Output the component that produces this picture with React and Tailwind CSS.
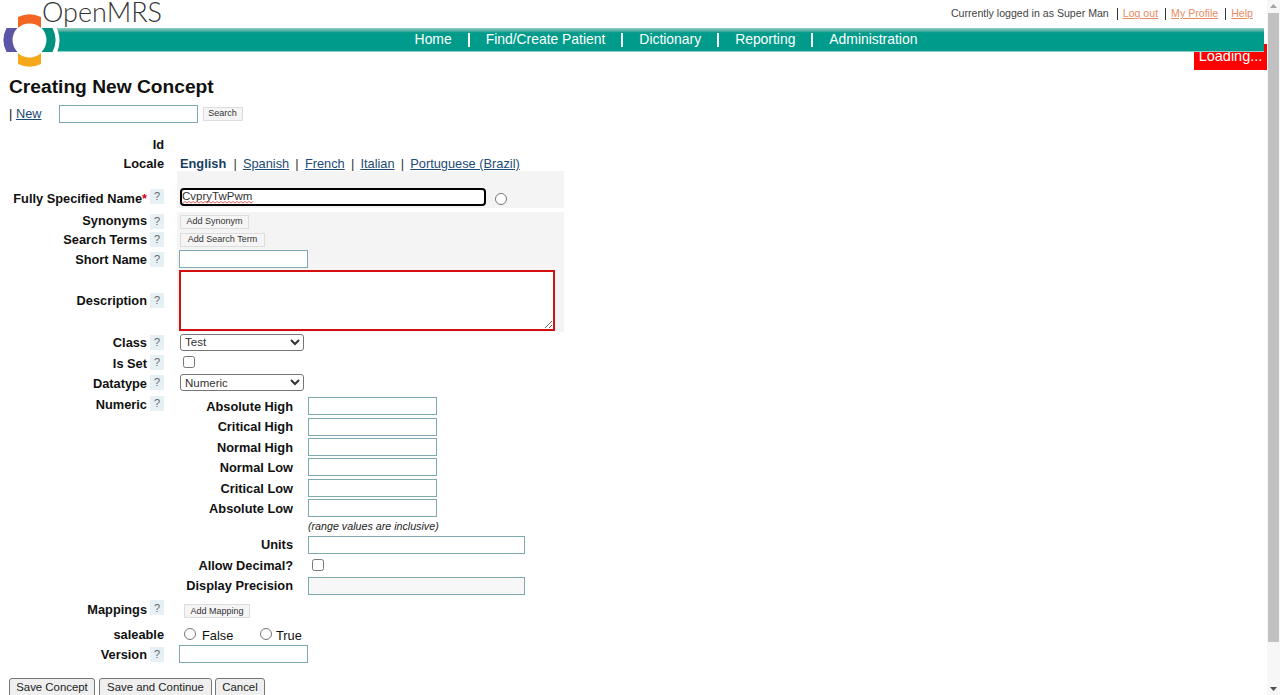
const F = "[font-family:'Liberation_Sans',Arial,sans-serif]";

function Help({ className = "" }) {
  return (
    <span className={`flex h-[15px] w-[14px] shrink-0 items-center justify-center bg-[#e7f0f5] text-[11px] text-[#666] ${className}`}>?</span>
  );
}

function Row({ h, label, help, helpCls = "", labelCls = "", children, className = "" }) {
  return (
    <div className={`flex ${className}`} style={{ height: h }}>
      <div className="flex w-[165px] shrink-0 justify-end items-center gap-[3px] pr-[1px]">
        {label && <b className={`whitespace-nowrap ${labelCls}`}>{label}</b>}
        {help && <Help className={helpCls} />}
      </div>
      <div className="ml-[14px] flex flex-1 items-center">{children}</div>
    </div>
  );
}

function TextBox({ w = "w-[129px]", gray }) {
  return <input className={`h-[18px] ${w} border border-[#7fa9b0] ${gray ? "bg-[#f7f7f7]" : "bg-white"}`} />;
}

function Small({ children, w }) {
  return (
    <button className={`flex h-[14px] items-center justify-center border border-[#dddddd] bg-[#f5f5f5] text-[9px] text-[#333] ${w}`}>
      {children}
    </button>
  );
}

function Sep() {
  return <span className="mx-[6.2px] text-[#333]">|</span>;
}

function Link({ children }) {
  return <a className="cursor-pointer text-[#1d4b75] underline">{children}</a>;
}

function NavSep() {
  return <span className="mx-[16px] h-[14px] w-[2px] bg-white" />;
}

function Sub({ label, children, h = 20.4, labelCls = "pt-[1px]" }) {
  return (
    <div className="flex items-center" style={{ height: h }}>
      <b className={`w-[118px] whitespace-nowrap text-right ${labelCls}`}>{label}</b>
      <div className="ml-[15px] flex items-center">{children}</div>
    </div>
  );
}

function Btn({ children, w }) {
  return (
    <button className={`h-[22px] whitespace-nowrap rounded-[3px] border border-[#767676] bg-[#efefef] pb-[3px] text-[11.4px] text-[#222] ${w}`}>{children}</button>
  );
}

function Logo() {
  return (
    <div className="absolute left-0 top-0 z-20 h-[70px] w-[170px]">
      <svg width="70" height="72" viewBox="0 0 70 72" className="absolute left-0 top-0">
        <circle cx="29.5" cy="40.5" r="30" fill="#fff" />
        <path d="M18 17 A26 26 0 0 1 41 17 L41 28 A17 17 0 0 0 18 28 Z" fill="#f26522" />
        <path d="M6.5 28 A26 26 0 0 0 6.5 52 L17.5 52 A17 17 0 0 1 17.5 28 Z" fill="#5b57a6" />
        <path d="M52.5 28 A26 26 0 0 1 52.5 52 L41.5 52 A17 17 0 0 0 41.5 28 Z" fill="#00917f" />
        <path d="M18 64 A26 26 0 0 0 41 64 L41 53 A17 17 0 0 1 18 53 Z" fill="#f6a81c" />
      </svg>
      <span className="absolute left-[42px] top-0 font-['Lato',sans-serif] text-[27px] font-light leading-[24px] text-[#333]">OpenMRS</span>
    </div>
  );
}

function Scrollbar() {
  return (
    <div className="flex h-full w-[13px] shrink-0 flex-col items-center bg-[#f7f7f7]">
      <svg width="13" height="13" viewBox="0 0 13 13"><path d="M3 8 L6.5 4 L10 8 Z" fill="#a3a3a3" /></svg>
      <div className="h-[629px] w-[11px] bg-[#c1c1c1]" />
      <div className="flex-1" />
      <svg width="13" height="13" viewBox="0 0 13 13"><path d="M3 5 L6.5 9 L10 5 Z" fill="#505050" /></svg>
    </div>
  );
}

export default function App() {
  return (
    <div className={`flex h-[695px] w-full overflow-hidden bg-white text-[12.8px] text-[#111] ${F}`}>
      <div className="relative min-w-0 flex-1 overflow-hidden">
        <div className="flex h-[28px] items-center justify-end pr-[14px] text-[10.6px] text-[#444]">
          <span>Currently logged in as Super Man</span>
          <span className="ml-[8px] mr-[5px] h-[12px] w-px bg-[#333]" />
          <a className="text-[#ea8a5f] underline">Log out</a>
          <span className="ml-[7px] mr-[5px] h-[12px] w-px bg-[#333]" />
          <a className="text-[#ea8a5f] underline">My Profile</a>
          <span className="ml-[7px] mr-[5px] h-[12px] w-px bg-[#333]" />
          <a className="text-[#ea8a5f] underline">Help</a>
        </div>

        <div className="relative z-10 ml-[50px] mr-[3px] flex h-[24px] items-center justify-center border-b border-[#8fd0c6] bg-gradient-to-b from-[#8fd0c6] via-[#009b8a] via-20% to-[#009b8a] pl-[18px] text-[13.9px] text-white">
          <span>Home</span>
          <NavSep />
          <span>Find/Create Patient</span>
          <NavSep />
          <span>Dictionary</span>
          <NavSep />
          <span>Reporting</span>
          <NavSep />
          <span>Administration</span>
        </div>

        <Logo />
        <div className="absolute right-0 top-[44px] flex h-[26px] w-[73px] items-end justify-center bg-[#ff0000] pb-[2px] text-[14.5px] text-white">
          Loading...
        </div>

        <div className="pl-[9px]">
          <h1 className="mt-[23px] h-[24px] text-[19.2px] font-bold leading-[24px] text-[#111]">Creating New Concept</h1>
          <div className="mt-[3px] flex h-[23px] items-center">
            <span>|&nbsp;</span>
            <Link>New</Link>
            <input className="ml-[17px] h-[18px] w-[139px] border border-[#7fa9b0] bg-white" />
            <Small w="ml-[5px] w-[40px]">Search</Small>
          </div>
        </div>

        <div className="mt-[11px]">
          <Row h={18} label="Id" />
          <Row h={17} label="Locale" labelCls="pt-[2px]">
            <span className="flex items-center pl-[1px] pt-[2px]">
              <b className="mr-[1px] text-[#173f63]">English</b>
              <Sep /><Link>Spanish</Link>
              <Sep /><Link>French</Link>
              <Sep /><Link>Italian</Link>
              <Sep /><Link>Portuguese (Brazil)</Link>
            </span>
          </Row>

          <div className="flex h-[37px]">
            <div className="flex w-[165px] shrink-0 items-center justify-end gap-[3px] pr-[1px]">
              <b className="whitespace-nowrap pt-[18px]">Fully Specified Name<span className="text-[#d0021b]">*</span></b>
              <Help className="mt-[13px]" />
            </div>
            <div className="ml-[12px] flex w-[387px] items-end bg-[#f4f4f4] pb-[4px] pl-[5px]">
              <span className="relative flex">
                <input
                  readOnly
                  spellCheck={false}
                  value="CvpryTwPwm"
                  className="h-[14px] w-[302px] rounded-[2px] bg-white pb-[2px] text-[11.5px] leading-[12px] text-[#333] outline-2 outline-black"
                />
                <svg width="70" height="3" viewBox="0 0 70 3" className="absolute bottom-0 left-[1px]">
                  <path d="M0 2 L2 0.5 L4 2 L6 0.5 L8 2 L10 0.5 L12 2 L14 0.5 L16 2 L18 0.5 L20 2 L22 0.5 L24 2 L26 0.5 L28 2 L30 0.5 L32 2 L34 0.5 L36 2 L38 0.5 L40 2 L42 0.5 L44 2 L46 0.5 L48 2 L50 0.5 L52 2 L54 0.5 L56 2 L58 0.5 L60 2 L62 0.5 L64 2 L66 0.5 L68 2 L70 0.5" fill="none" stroke="#d9534f" strokeWidth="0.9" />
                </svg>
              </span>
              <input type="radio" className="mb-[-1px] ml-[11px] size-[12px]" />
            </div>
          </div>

          <div className="mt-[4px] flex">
            <div className="w-[165px] shrink-0">
              <div className="flex h-[18px] items-center justify-end gap-[3px] pr-[1px]"><b>Synonyms</b><Help /></div>
              <div className="flex h-[19px] items-center justify-end gap-[3px] pr-[1px]"><b>Search Terms</b><Help /></div>
              <div className="flex h-[20px] items-center justify-end gap-[3px] pr-[1px]"><b className="pt-[2px]">Short Name</b><Help /></div>
              <div className="flex h-[63px] items-center justify-end gap-[3px] pr-[1px]"><b>Description</b><Help /></div>
            </div>
            <div className="ml-[12px] w-[387px] bg-[#f4f4f4] pl-[2px]">
              <div className="flex h-[18px] items-center pl-[1px] pt-[1px]"><Small w="w-[69px]">Add Synonym</Small></div>
              <div className="flex h-[19px] items-center pl-[1px]"><Small w="w-[85px]">Add Search Term</Small></div>
              <div className="flex h-[20px] items-center"><TextBox /></div>
              <div className="flex h-[63px] items-center">
                <textarea className="h-[61px] w-[376px] border-2 border-[#d40f0f] bg-white" />
              </div>
            </div>
          </div>

          <Row h={20} label="Class" help labelCls="pt-[2px]">
            <select className="ml-[1px] h-[17px] w-[124px] rounded-[3px] border border-[#767676] bg-white text-[11.5px] text-[#333]" defaultValue="Test">
              <option>Test</option>
            </select>
          </Row>
          <Row h={20} label="Is Set" help labelCls="pt-[4px]">
            <input type="checkbox" className="mb-[1px] ml-[4px] size-[12px]" />
          </Row>
          <Row h={21} label="Datatype" help labelCls="pt-[2px]">
            <select className="ml-[1px] h-[17px] w-[124px] rounded-[3px] border border-[#767676] bg-white text-[11.5px] text-[#333]" defaultValue="Numeric">
              <option>Numeric</option>
            </select>
          </Row>

          <div className="flex">
            <div className="flex h-[20px] w-[165px] shrink-0 items-center justify-end gap-[3px] pr-[1px]">
              <b className="pt-[4px]">Numeric</b><Help />
            </div>
            <div className="ml-[10px] pt-[3px]">
              <Sub label="Absolute High"><TextBox /></Sub>
              <Sub label="Critical High"><TextBox /></Sub>
              <Sub label="Normal High"><TextBox /></Sub>
              <Sub label="Normal Low"><TextBox /></Sub>
              <Sub label="Critical Low"><TextBox /></Sub>
              <Sub label="Absolute Low"><TextBox /></Sub>
              <div className="flex h-[16px] items-center pl-[133px] text-[10.7px] italic text-[#222]">(range values are inclusive)</div>
              <Sub label="Units" h={21} labelCls=""><TextBox w="w-[217px]" /></Sub>
              <Sub label="Allow Decimal?" h={20} labelCls=""><input type="checkbox" className="mb-[1px] ml-[4px] size-[12px]" /></Sub>
              <Sub label="Display Precision" h={21} labelCls=""><TextBox w="w-[217px]" gray /></Sub>
            </div>
          </div>

          <Row h={26} label="Mappings" help helpCls="mb-[3px]">
            <span className="pt-[4px]"><Small w="ml-[5px] w-[66px]">Add Mapping</Small></span>
          </Row>
          <Row h={20} label="saleable" className="mt-[2px]">
            <span className="ml-[5px] flex items-center">
              <input type="radio" className="size-[12px]" />
              <span className="ml-[6px] w-[32px] pt-[2px]">False</span>
              <input type="radio" className="ml-[26px] size-[12px]" />
              <span className="ml-[4px] pt-[2px]">True</span>
            </span>
          </Row>
          <Row h={20} label="Version" help><TextBox /></Row>
        </div>

        <div className="mt-[14px] flex pl-[9px]">
          <Btn w="w-[86px]">Save Concept</Btn>
          <Btn w="ml-[4px] w-[113px]">Save and Continue</Btn>
          <Btn w="ml-[3px] w-[50px]">Cancel</Btn>
        </div>
      </div>
      <Scrollbar />
    </div>
  );
}
